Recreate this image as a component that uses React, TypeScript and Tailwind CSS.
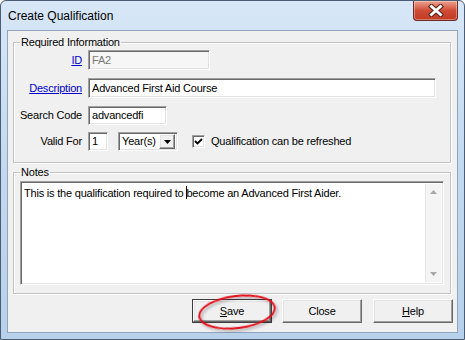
import React from "react";

const sunken =
  "border border-t-[#a0a0a0] border-l-[#a0a0a0] border-b-white border-r-white shadow-[inset_1px_1px_0_#696969,inset_-1px_-1px_0_#e3e3e3]";
const raised =
  "border border-t-white border-l-white border-b-[#696969] border-r-[#696969] shadow-[inset_-1px_-1px_0_#a0a0a0,inset_1px_1px_0_#e3e3e3] bg-[#f0f0f0]";

const Label = ({ children, link }: { children: React.ReactNode; link?: boolean }) => (
  <div className="w-[68px] text-right leading-[13px]">
    {link ? <span className="text-[#0000cc] underline">{children}</span> : children}
  </div>
);

const App = () => {
  return (
    <div className="w-[465px] h-[340px] bg-white font-['Liberation_Sans',Arial,sans-serif] text-[11px] tracking-[-0.2px] text-black">
      <div className="relative w-[465px] h-[340px] border border-[#4b5d73] rounded-t-[6px] bg-gradient-to-b from-[#d7e7f7] via-[#c3d9ef] to-[#b8d0ea] flex flex-col">
        {/* title bar */}
        <div className="h-[29px] flex items-center pl-[7px] text-[12px] tracking-normal text-black">Create Qualification</div>
        <div className="absolute top-0 right-[6px] w-[45px] h-[20px] rounded-b-[4px] border border-t-0 border-[#6b2a22] bg-gradient-to-b from-[#eba08f] via-[#cf4b35] to-[#c13a24] flex items-center justify-center shadow-[inset_0_0_0_1px_rgba(255,255,255,0.35)]">
          <svg width="16" height="13" viewBox="0 0 16 13">
            <path d="M3.5 2.5 L12.5 10.5 M12.5 2.5 L3.5 10.5" stroke="#5a2018" strokeWidth="5" strokeLinecap="square" />
            <path d="M3.5 2.5 L12.5 10.5 M12.5 2.5 L3.5 10.5" stroke="#fff" strokeWidth="3" strokeLinecap="square" />
          </svg>
        </div>

        {/* client area */}
        <div className="mx-[6px] h-[303px] border border-[#8ea4bf] bg-[#f0f0f0] pl-[5px] flex flex-col">
          <fieldset className="mt-[5px] w-[438px] h-[127px] border border-[#c2c2c2] shadow-[inset_1px_1px_0_#fff,1px_1px_0_#fff]">
            <legend className="ml-[6px] px-[1px] leading-[13px]">Required Information</legend>
            <div className="flex flex-col">
              <div className="flex items-center mt-[1px]">
                <Label link>ID</Label>
                <div className={`ml-[6px] w-[122px] h-[20px] bg-[#f6f6f6] text-[#7a7a7a] pl-[3px] flex items-center ${sunken}`}>FA2</div>
              </div>
              <div className="flex items-center mt-[8px]">
                <Label link>Description</Label>
                <div className={`ml-[6px] w-[348px] h-[20px] bg-white pl-[3px] flex items-center ${sunken}`}>Advanced First Aid Course</div>
              </div>
              <div className="flex items-center mt-[8px]">
                <Label>Search Code</Label>
                <div className={`ml-[6px] w-[79px] h-[19px] bg-white pl-[3px] flex items-center ${sunken}`}>advancedfi</div>
              </div>
              <div className="flex items-center mt-[7px]">
                <Label>Valid For</Label>
                <div className={`ml-[6px] w-[20px] h-[19px] bg-white pl-[3px] flex items-center ${sunken}`}>1</div>
                <div className={`ml-[10px] w-[60px] h-[19px] bg-white flex items-center p-[2px] ${sunken}`}>
                  <span className="flex-1 pl-[1px]">Year(s)</span>
                  <div className={`w-[16px] h-[15px] flex items-center justify-center ${raised}`}>
                    <svg width="7" height="4" viewBox="0 0 7 4">
                      <path d="M0 0 H7 L3.5 4 Z" fill="#000" />
                    </svg>
                  </div>
                </div>
                <div className={`ml-[14px] w-[13px] h-[13px] bg-white flex items-center justify-center ${sunken}`}>
                  <svg width="9" height="9" viewBox="0 0 9 9">
                    <path d="M1 4 L3.5 6.5 L8 2" stroke="#000" strokeWidth="1.8" fill="none" />
                  </svg>
                </div>
                <span className="ml-[6px]">Qualification can be refreshed</span>
              </div>
            </div>
          </fieldset>

          <fieldset className="mt-[3px] w-[438px] h-[128px] border border-[#c2c2c2] shadow-[inset_1px_1px_0_#fff,1px_1px_0_#fff]">
            <legend className="ml-[6px] px-[1px] leading-[13px]">Notes</legend>
            <div className={`mt-[2px] ml-[6px] w-[424px] h-[104px] bg-white flex p-[2px] ${sunken}`}>
              <div className="flex-1 pl-[1px] pt-[2px] leading-[14px]">
                This is the qualification required to{" "}
                <span className="inline-block w-px h-[13px] bg-black align-[-2px] -mr-px" />
                become an Advanced First Aider.
              </div>
              <div className="w-[16px] h-full bg-[#f4f4f4] border-l border-[#e6e6e6] flex flex-col justify-between items-center py-[6px]">
                <svg width="7" height="4" viewBox="0 0 7 4">
                  <path d="M0 4 H7 L3.5 0 Z" fill="#a8a8a8" />
                </svg>
                <svg width="7" height="4" viewBox="0 0 7 4">
                  <path d="M0 0 H7 L3.5 4 Z" fill="#a8a8a8" />
                </svg>
              </div>
            </div>
          </fieldset>

          <div className="mt-[5px] flex justify-end gap-[10px] pr-[4px]">
            <div className="w-[80px] h-[24px] border border-[#3c3c3c] flex">
              <div className={`flex-1 flex items-center justify-center ${raised}`}>
                <span><span className="underline">S</span>ave</span>
              </div>
            </div>
            <div className={`w-[80px] h-[24px] flex items-center justify-center ${raised}`}>Close</div>
            <div className={`w-[80px] h-[24px] ml-[1px] flex items-center justify-center ${raised}`}>
              <span><span className="underline">H</span>elp</span>
            </div>
          </div>
        </div>

        {/* annotation ring around Save */}
        <svg className="absolute left-[195px] top-[292px]" width="88" height="40" viewBox="0 0 88 40">
          <defs>
            <filter id="sh" x="-20%" y="-30%" width="140%" height="160%">
              <feDropShadow dx="1.5" dy="2" stdDeviation="1.5" floodColor="#000" floodOpacity="0.35" />
            </filter>
          </defs>
          <ellipse cx="41" cy="19" rx="38" ry="16" transform="rotate(-7 41 19)" fill="none" stroke="#e3101c" strokeWidth="2" filter="url(#sh)" />
        </svg>
      </div>
    </div>
  );
};

export default App;
